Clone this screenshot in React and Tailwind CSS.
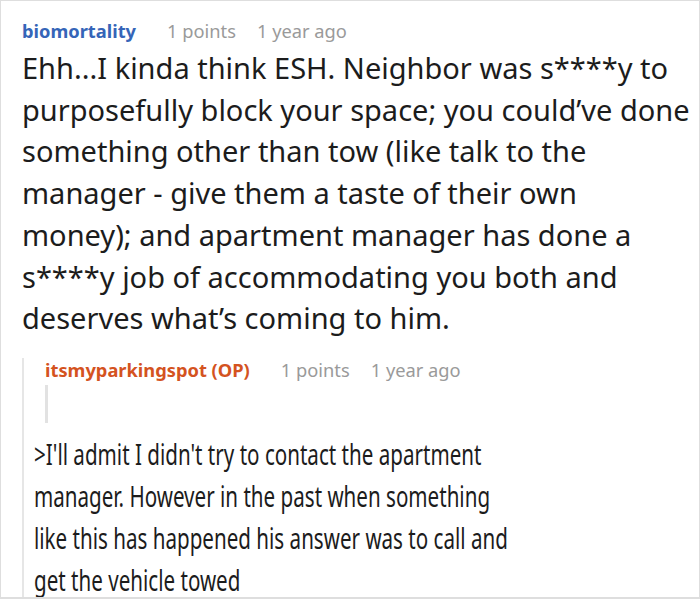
import React from "react";

const font = { fontFamily: '"Noto Sans", "Open Sans", sans-serif' };

const Meta = ({ name, color }) => (
  <div className="flex items-baseline text-[18.3px] leading-[24px]">
    <span className={`font-bold ${color}`}>{name}</span>
    <span className="ml-[31px] text-[#9a9a9a]">1 points</span>
    <span className="ml-[21px] text-[#9a9a9a]">1 year ago</span>
  </div>
);

export default function App() {
  return (
    <div
      className="w-[700px] h-[599px] overflow-hidden border border-[#dedede] border-b-2 bg-white"
      style={font}
    >
      {/* top comment */}
      <div className="pl-[21px] pt-[18px]">
        <Meta name="biomortality" color="text-[#3565b8]" />
        <p className="mt-[4px] text-[29px] leading-[41.7px] text-[#1c1c1c] whitespace-nowrap">
          Ehh...I kinda think ESH. Neighbor was s****y to
          <br />
          purposefully block your space; you could’ve done
          <br />
          something other than tow (like talk to the
          <br />
          manager - give them a taste of their own
          <br />
          money); and apartment manager has done a
          <br />
          s****y job of accommodating you both and
          <br />
          deserves what’s coming to him.
        </p>
      </div>

      {/* reply */}
      <div className="ml-[21px] mt-[19px] border-l-2 border-[#e6e6e6] pl-[21px]">
        <Meta name="itsmyparkingspot (OP)" color="text-[#d4531f]" />
        <div className="mt-[3px] h-[38px] w-[3px] bg-[#e2e2e2]" />
        <p className="mt-[10px] -ml-[11px] origin-left scale-x-[0.71] w-[900px] text-[29px] leading-[42px] text-[#1c1c1c] whitespace-nowrap">
          &gt;I'll admit I didn't try to contact the apartment
          <br />
          manager. However in the past when something
          <br />
          like this has happened his answer was to call and
          <br />
          get the vehicle towed
        </p>
      </div>
    </div>
  );
}
